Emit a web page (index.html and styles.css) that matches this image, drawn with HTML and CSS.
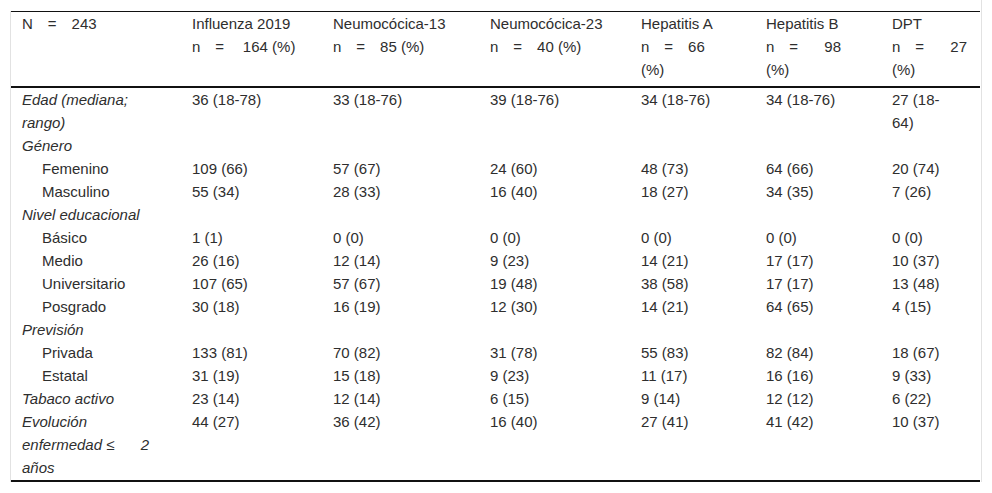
FILE: index.html
```html
<!DOCTYPE html>
<html lang="es">
<head>
<meta charset="utf-8">
<title>Tabla</title>
<link rel="stylesheet" href="styles.css">
</head>
<body>
<div class="page">
  <div class="wrap">
    <table class="data">
      <colgroup>
        <col class="c1"><col class="c2"><col class="c3"><col class="c4"><col class="c5"><col class="c6"><col class="c7">
      </colgroup>
      <thead>
        <tr>
          <th>N&#8195;=&#8195;243</th>
          <th>Influenza 2019<br>n&#8195;=&#8195;&#8197;164 (%)</th>
          <th>Neumocócica-13<br>n&#8195;=&#8195;85 (%)</th>
          <th>Neumocócica-23<br>n&#8195;=&#8195;40 (%)</th>
          <th>Hepatitis A<br>n&#8195;=&#8195;66<br>(%)</th>
          <th>Hepatitis B<br>n&#8195;=&#8195;&#8194;&#8197;98<br>(%)</th>
          <th>DPT<br>n&#8195;=&#8195;&#8194;&#8197;27<br>(%)</th>
        </tr>
      </thead>
      <tbody>
        <tr><td class="cat">Edad (mediana;<br>rango)</td><td>36 (18-78)</td><td>33 (18-76)</td><td>39 (18-76)</td><td>34 (18-76)</td><td>34 (18-76)</td><td>27 (18-<br>64)</td></tr>
        <tr><td class="cat">Género</td><td></td><td></td><td></td><td></td><td></td><td></td></tr>
        <tr><td class="sub">Femenino</td><td>109 (66)</td><td>57 (67)</td><td>24 (60)</td><td>48 (73)</td><td>64 (66)</td><td>20 (74)</td></tr>
        <tr><td class="sub">Masculino</td><td>55 (34)</td><td>28 (33)</td><td>16 (40)</td><td>18 (27)</td><td>34 (35)</td><td>7 (26)</td></tr>
        <tr><td class="cat">Nivel educacional</td><td></td><td></td><td></td><td></td><td></td><td></td></tr>
        <tr><td class="sub">Básico</td><td>1 (1)</td><td>0 (0)</td><td>0 (0)</td><td>0 (0)</td><td>0 (0)</td><td>0 (0)</td></tr>
        <tr><td class="sub">Medio</td><td>26 (16)</td><td>12 (14)</td><td>9 (23)</td><td>14 (21)</td><td>17 (17)</td><td>10 (37)</td></tr>
        <tr><td class="sub">Universitario</td><td>107 (65)</td><td>57 (67)</td><td>19 (48)</td><td>38 (58)</td><td>17 (17)</td><td>13 (48)</td></tr>
        <tr><td class="sub">Posgrado</td><td>30 (18)</td><td>16 (19)</td><td>12 (30)</td><td>14 (21)</td><td>64 (65)</td><td>4 (15)</td></tr>
        <tr><td class="cat">Previsión</td><td></td><td></td><td></td><td></td><td></td><td></td></tr>
        <tr><td class="sub">Privada</td><td>133 (81)</td><td>70 (82)</td><td>31 (78)</td><td>55 (83)</td><td>82 (84)</td><td>18 (67)</td></tr>
        <tr><td class="sub">Estatal</td><td>31 (19)</td><td>15 (18)</td><td>9 (23)</td><td>11 (17)</td><td>16 (16)</td><td>9 (33)</td></tr>
        <tr><td class="cat">Tabaco activo</td><td>23 (14)</td><td>12 (14)</td><td>6 (15)</td><td>9 (14)</td><td>12 (12)</td><td>6 (22)</td></tr>
        <tr class="last"><td class="cat">Evolución<br>enfermedad ≤&#8195;&#8194;&#8197;2<br>años</td><td>44 (27)</td><td>36 (42)</td><td>16 (40)</td><td>27 (41)</td><td>41 (42)</td><td>10 (37)</td></tr>
      </tbody>
    </table>
  </div>
</div>
</body>
</html>
```

FILE: styles.css
```css
html, body {
  margin: 0;
  padding: 0;
  background: #ffffff;
}

body {
  font-family: "Liberation Sans", Arial, sans-serif;
  font-size: 15px;
  color: #2e2e2e;
}

.page {
  margin-left: 10px;
  width: 971px;
  padding-top: 11px;
  border-right: 1px solid #e2e2e2;
}

.wrap {
  border-left: 1px solid #e2e2e2;
}

.data {
  width: 969px;
  table-layout: fixed;
  border-collapse: separate;
  border-spacing: 0;
  border-top: 1px solid #111111;
  border-bottom: 2px solid #111111;
}

.c1 { width: 170px; }
.c2 { width: 141px; }
.c3 { width: 157px; }
.c4 { width: 151px; }
.c5 { width: 125px; }
.c6 { width: 126px; }
.c7 { width: 99px; }

.data th,
.data td {
  padding: 0 0 0 11px;
  line-height: 23px;
  text-align: left;
  vertical-align: top;
  white-space: nowrap;
  font-weight: normal;
}

.data th {
  padding-bottom: 5px;
  border-bottom: 2px solid #111111;
}

.data td.cat {
  font-style: italic;
}

.data td.sub {
  padding-left: 31px;
}

.data tr.last td {
  padding-bottom: 1px;
}
```
